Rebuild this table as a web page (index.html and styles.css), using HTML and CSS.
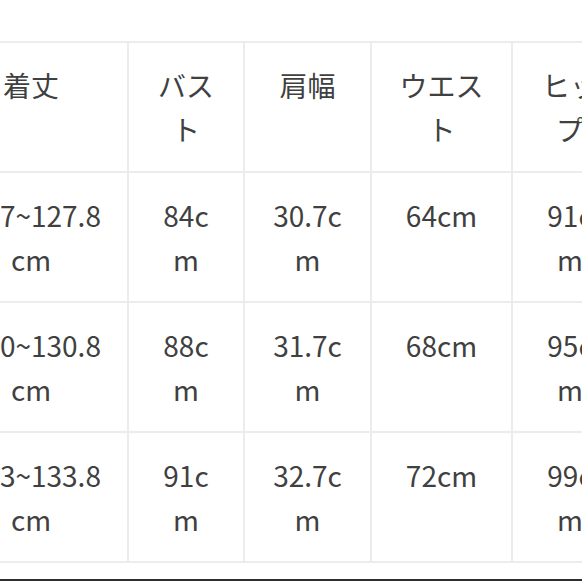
FILE: index.html
```html
<!DOCTYPE html>
<html lang="ja">
<head>
<meta charset="utf-8">
<link rel="stylesheet" href="styles.css">
</head>
<body>
<div class="page">
  <table class="size-table">
    <colgroup>
      <col class="c1"><col class="c2"><col class="c3"><col class="c4"><col class="c5">
    </colgroup>
    <tr>
      <td>着丈</td><td>バスト</td><td>肩幅</td><td>ウエスト</td><td>ヒップ</td>
    </tr>
    <tr>
      <td>24.7~127.8cm</td><td>84cm</td><td>30.7cm</td><td>64cm</td><td>91cm</td>
    </tr>
    <tr>
      <td>27.0~130.8cm</td><td>88cm</td><td>31.7cm</td><td>68cm</td><td>95cm</td>
    </tr>
    <tr>
      <td>30.3~133.8cm</td><td>91cm</td><td>32.7cm</td><td>72cm</td><td>99cm</td>
    </tr>
  </table>
  <div class="rule"></div>
</div>
</body>
</html>
```
FILE: styles.css
```css
html, body {
  margin: 0;
  padding: 0;
  background: #ffffff;
  overflow: hidden;
}
.page {
  width: 582px;
  height: 582px;
  overflow: hidden;
  padding-top: 41px;
  box-sizing: border-box;
}
.size-table {
  margin-left: -67px;
  border-collapse: collapse;
  table-layout: fixed;
  width: 694px;
  font-family: "Noto Sans CJK JP", "Noto Sans", sans-serif;
  font-size: 28px;
  line-height: 44px;
  color: #404040;
}
.c1 { width: 194px; }
.c2 { width: 116px; }
.c3 { width: 127px; }
.c4 { width: 141px; }
.c5 { width: 116px; }
.size-table tr {
  height: 130px;
}
.size-table td {
  border: 2px solid #ececec;
  padding: 20px 26px 0;
  vertical-align: top;
  text-align: center;
  word-break: break-all;
  box-sizing: border-box;
}
.rule {
  margin-top: 16px;
  width: 100%;
  border-top: 2px solid #2e2e2e;
}
```
